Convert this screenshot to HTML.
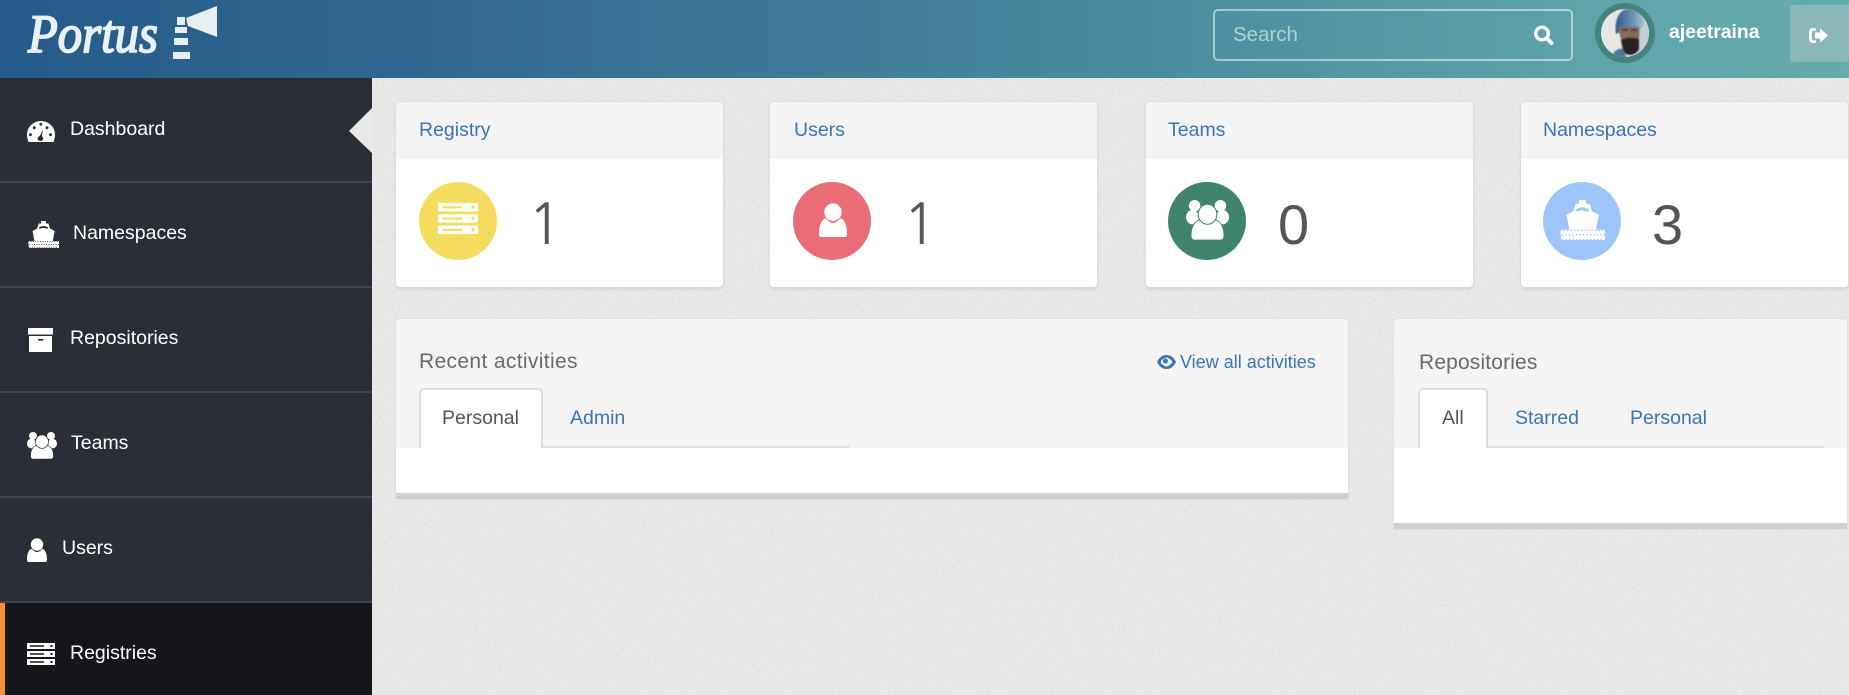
<!DOCTYPE html>
<html lang="en"><head><meta charset="utf-8"><title>Portus</title>
<style>
html,body{margin:0;padding:0;width:1849px;height:695px;overflow:hidden;background:#e9e9e9;font-family:"Liberation Sans",Arial,sans-serif}
.a{position:absolute}
.t{position:absolute;white-space:nowrap;line-height:1;font-size:19.5px}
.w{color:#fff}.b{color:#3a75b5}
.hd{left:0;top:0;width:1849px;height:78px;background:linear-gradient(90deg,#265b8a 0,#2f668f 22%,#4b8e9e 64%,#5ea4a9 86%,#67abab 100%)}
.side{left:0;top:78px;width:372px;height:617px;background:#2b2e37}
.dv{left:0;width:372px;height:2px;background:#40434e}
.card{width:327px;height:185px;top:102px;background:#fff;border-radius:4px;box-shadow:0 0 0 1px #dcdcdc,0 2px 3px rgba(0,0,0,.1);overflow:hidden}
.card i{display:block;height:57px;background:#f4f4f4}
.circ{width:78px;height:78px;border-radius:50%;top:182px}
.num{font-size:56px;color:#555;top:197px}
.one{font-family:"NanumGothic","Liberation Sans",sans-serif}
.panel{background:#fff;border-radius:4px 4px 0 0;box-shadow:0 0 0 1px #e0e0e0;border-bottom:6px solid #cfcfcf;box-sizing:border-box}
.ph{left:0;top:0;right:0;height:129px;background:#f4f4f4;border-radius:4px 4px 0 0}
.tab{top:388px;height:60px;background:#fff;border:2px solid #dcdcdc;border-bottom:0;border-radius:5px 5px 0 0;box-sizing:border-box}
.ln{height:2px;top:446px;background:#dcdcdc}
.tt{font-size:21px;color:#6a6a6a;letter-spacing:.35px;top:351px}
svg{position:absolute;overflow:visible}
</style></head><body>
<svg width="0" height="0" style="left:0;top:0">
<defs>
<filter id="nz" x="0" y="0" width="100%" height="100%"><feTurbulence type="fractalNoise" baseFrequency=".55" numOctaves="3" seed="4"/><feColorMatrix values="0 0 0 0 .55  0 0 0 0 .55  0 0 0 0 .55  .5 .5 0 0 -.45"/></filter>
<filter id="bl"><feGaussianBlur stdDeviation=".9"/></filter>
<symbol id="server" viewBox="0 0 28 22" preserveAspectRatio="none">
<path fill="#fff" d="M0 0h28v6H0zM0 8h28v6H0zM0 16h28v6H0z"/>
<path fill="var(--c)" d="M3 2.3h14v1.5H3zM3 10.3h14v1.5H3zM3 18.3h14v1.5H3zM23.5 2h2v2h-2zM23.5 10h2v2h-2zM23.5 18h2v2h-2z"/>
</symbol>
<symbol id="user" viewBox="0 0 20 24" preserveAspectRatio="none">
<path fill="#fff" d="M1.5 24C.5 24 0 23 0 21.5 0 15 2 11.500 5 10.500c1.500 2.500 3 3.500 5 3.500s3.500-1 5-3.500c3 1 5 4.500 5 11 0 1.500-.5 2.500-1.500 2.500z"/>
<circle cx="10" cy="6.500" r="6.500" fill="#fff" stroke="var(--c)" stroke-width=".6"/>
</symbol>
<symbol id="team" viewBox="0 0 30 28" preserveAspectRatio="none">
<g fill="#fff">
<circle cx="6" cy="4" r="4"/><circle cx="24" cy="4" r="4"/>
<ellipse cx="4.500" cy="12" rx="4.500" ry="5"/><ellipse cx="25.500" cy="12" rx="4.500" ry="5"/>
<path d="M6 28c-1.500 0-2.500-1-2.500-3 0-6 2.500-10.500 6-11 2 2.500 9 2.500 11 0 3.500.5 6 5 6 11 0 2-1 3-2.500 3z" stroke="var(--c)" stroke-width=".6"/>
<ellipse cx="15" cy="10" rx="6.500" ry="7" stroke="var(--c)" stroke-width=".7"/>
</g>
</symbol>
<symbol id="ship" viewBox="0 0 31 27" preserveAspectRatio="none">
<path fill="#fff" d="M13 0h5v2.500h2.500l1.500 5 4.700 2.500-2 10.500H6.500l-2-10.500L9.200 7.500l1.500-5H13z"/>
<path fill="var(--c)" d="M11 6.500c2.800-2 6.200-2 9 0l-.5 1.500c-2.500-1.300-5.500-1.300-8 0z"/>
<path fill="#fff" d="M0 20h31v7H1z"/>
<path stroke="var(--c)" stroke-width="1.100" stroke-linecap="round" stroke-dasharray="0 2.400" d="M.5 20.500h30M1.700 23.500h29"/>
<path stroke="var(--c)" stroke-width="1.100" stroke-linecap="round" stroke-dasharray="0 2.400" d="M2 26.800h28"/>
</symbol>
</defs>
</svg>
<svg style="left:372px;top:78px" width="1477" height="617"><rect width="1477" height="617" filter="url(#nz)"/></svg>

<div class="a hd"></div>
<!-- logo -->
<svg style="left:0;top:0" width="240" height="78">
<text x="28" y="52" font-family="'Liberation Serif',serif" font-style="italic" font-size="54" fill="#e9f1f5" stroke="#e9f1f5" stroke-width="1.800" stroke-linejoin="round" textLength="130" lengthAdjust="spacingAndGlyphs">Portus</text>
<path fill="#e6eef2" d="M177 17h8v8h-8zM175 27h12v6h-12zM174 38h14v7h-14zM173 52h17v7h-17z"/>
<path fill="#e6eef2" d="M186 18 217 6v31l-29-11z"/>
</svg>
<!-- search -->
<div class="a" style="left:1213px;top:9px;width:360px;height:52px;box-sizing:border-box;border:2px solid rgba(255,255,255,.5);border-radius:5px"></div>
<div class="t" style="left:1233px;top:25px;font-size:20.500px;color:#a9d3d5">Search</div>
<svg style="left:1533px;top:25px" width="21" height="20" viewBox="0 0 21 20"><circle cx="9" cy="8.500" r="6.300" fill="none" stroke="#fff" stroke-width="3.400"/><path d="M14 13.500l4.500 4.500" stroke="#fff" stroke-width="4" stroke-linecap="round"/></svg>
<!-- avatar -->
<svg style="left:1595px;top:3px" width="60" height="60" viewBox="0 0 60 60">
<defs><clipPath id="av"><circle cx="30" cy="30" r="24"/></clipPath>
<linearGradient id="tb" x1="0" x2="1"><stop offset="0" stop-color="#2f5d8c"/><stop offset=".6" stop-color="#6f95b5"/><stop offset="1" stop-color="#bccbd6"/></linearGradient></defs>
<circle cx="30" cy="30" r="30" fill="#43847f"/>
<g clip-path="url(#av)">
<rect width="60" height="60" fill="#e8e7e3"/>
<rect x="42" y="20" width="14" height="36" fill="#c5cfd6"/>
<g filter="url(#bl)">
<path d="M21 31C19 16 25 5 36 5c9 0 14 6 15 15l-8 8-16 0z" fill="url(#tb)"/>
<path d="M24 24h20c1 7 0 16-3 20-4 3-10 3-12 0-3-5-5-14-5-20z" fill="#86695a"/>
<path d="M26 37c4-3 13-3 18-1v10c-3 7-13 8-16 2z" fill="#2a2320"/>
<path d="M20 48c3-2 5-3 8-2l5 12H14z" fill="#4e7a98"/>
<path d="M27 27h6M36 27h6" stroke="#3f352e" stroke-width="1.800"/>
</g>
</g></svg>
<div class="t w" style="left:1669px;top:23px;font-weight:700;font-size:19.4px">ajeetraina</div>
<div class="a" style="left:1790px;top:5px;width:59px;height:57px;background:#8ab8b9;border-radius:3px 0 0 3px"></div>
<svg style="left:1809px;top:28px" width="19" height="15" viewBox="0 0 19 15"><path fill="none" stroke="#fff" stroke-width="2.800" d="M7 1.400H4C2.500 1.400 1.400 2.500 1.400 4v7c0 1.500 1.100 2.600 2.600 2.600h3"/><path fill="#fff" d="M6 4.500h5V.5L19 7.500l-8 7v-4H6z"/></svg>

<!-- sidebar -->
<div class="a side"></div>
<div class="a dv" style="top:181px"></div><div class="a dv" style="top:286px"></div><div class="a dv" style="top:391px"></div><div class="a dv" style="top:496px"></div><div class="a dv" style="top:601px"></div>
<div class="a" style="left:0;top:603px;width:372px;height:92px;background:#151619"></div>
<div class="a" style="left:0;top:603px;width:5px;height:92px;background:#f68f33"></div>
<svg style="left:349px;top:108px" width="23" height="45"><path fill="#e9e9e9" d="M23 0v45L0 23z"/></svg>

<svg style="left:27px;top:121px" width="28" height="21" viewBox="0 0 27 21" preserveAspectRatio="none">
<path fill="#fff" d="M13.500 0A13.500 13.500 0 0 0 0 13.500c0 2.700.6 5.300 1.500 7.500h24c.9-2.200 1.500-4.800 1.500-7.500A13.500 13.500 0 0 0 13.500 0z"/>
<g fill="#2b2e37"><circle cx="13.300" cy="3.300" r="1.400"/><circle cx="7" cy="6.700" r="1.400"/><circle cx="19.300" cy="6.700" r="1.400"/><circle cx="3.300" cy="13.700" r="1.400"/><circle cx="22.700" cy="13.700" r="1.400"/>
<path d="M15.300 8.500l-.9 6.800c.9.7 1.200 1.500 1.200 2.400 0 1.300-1 2.300-2.600 2.300s-2.800-1-2.800-2.300c0-1.300.9-2.300 2.200-2.700z"/></g></svg>
<div class="t w" style="left:70px;top:120px">Dashboard</div>

<svg style="left:28px;top:221px;--c:#2b2e37" width="31" height="27"><use href="#ship"/></svg>
<div class="t w" style="left:73px;top:224px">Namespaces</div>

<svg style="left:28px;top:328px" width="25" height="24" viewBox="0 0 25 24"><path fill="#fff" d="M0 0h25v6.500H0zM1 8h23v16H1z"/><path fill="#2b2e37" d="M10 11h5.500v1.600H10z"/></svg>
<div class="t w" style="left:70px;top:329px">Repositories</div>

<svg style="left:27px;top:432px;--c:#2b2e37" width="30" height="27"><use href="#team"/></svg>
<div class="t w" style="left:71px;top:434px">Teams</div>

<svg style="left:27px;top:538px;--c:#2b2e37" width="20" height="24"><use href="#user"/></svg>
<div class="t w" style="left:62px;top:539px">Users</div>

<svg style="left:27px;top:643px;--c:#151619" width="28" height="22"><use href="#server"/></svg>
<div class="t w" style="left:70px;top:644px">Registries</div>

<!-- cards -->
<div class="a card" style="left:396px"><i></i></div>
<div class="a card" style="left:770px"><i></i></div>
<div class="a card" style="left:1146px"><i></i></div>
<div class="a card" style="left:1521px"><i></i></div>
<div class="t b" style="left:419px;top:121px">Registry</div>
<div class="t b" style="left:794px;top:121px">Users</div>
<div class="t b" style="left:1168px;top:121px">Teams</div>
<div class="t b" style="left:1543px;top:121px">Namespaces</div>

<div class="a circ" style="left:419px;background:#f4dc5e"></div>
<div class="a circ" style="left:793px;background:#ea6c77"></div>
<div class="a circ" style="left:1168px;background:#40846c"></div>
<div class="a circ" style="left:1543px;background:#9dc5f9"></div>
<svg style="left:438px;top:203px;--c:#f4dc5e" width="40" height="31"><use href="#server"/></svg>
<svg style="left:819px;top:203px;--c:#ea6c77" width="28" height="34"><use href="#user"/></svg>
<svg style="left:1186px;top:200px;--c:#40846c" width="43" height="40"><use href="#team"/></svg>
<svg style="left:1560px;top:200px;--c:#9dc5f9" width="45" height="40"><use href="#ship"/></svg>
<div class="t num one" style="left:528px">1</div>
<div class="t num one" style="left:903px">1</div>
<div class="t num" style="left:1278px">0</div>
<div class="t num" style="left:1652px">3</div>

<!-- panels -->
<div class="a panel" style="left:396px;top:319px;width:952px;height:180px"><div class="a ph"></div></div>
<div class="a panel" style="left:1394px;top:319px;width:453px;height:210px"><div class="a ph"></div></div>
<div class="t tt" style="left:419px">Recent activities</div>
<div class="t tt" style="left:1419px;letter-spacing:.15px;top:352px">Repositories</div>
<svg style="left:1157px;top:355px" width="19" height="14" viewBox="0 0 19 14"><path fill="#3a75b5" fill-rule="evenodd" d="M9.500 0C5 0 2 3 0 7c2 4 5 7 9.500 7s7.500-3 9.500-7c-2-4-5-7-9.500-7zm0 2.500a4.500 4.500 0 1 1 0 9 4.500 4.500 0 0 1 0-9zm-6 4.500c.7-1.300 1.500-2.300 2.500-3a5.500 5.500 0 0 0 0 6c-1-.7-1.800-1.700-2.500-3zm12 0c-.7 1.300-1.500 2.300-2.500 3a5.500 5.500 0 0 0 0-6c1 .7 1.800 1.700 2.500 3z"/><circle cx="8.500" cy="6" r="2.500" fill="#3a75b5"/></svg>
<div class="t b" style="left:1180px;top:353px;font-size:18px">View all activities</div>

<div class="a ln" style="left:543px;width:306px"></div>
<div class="a tab" style="left:419px;width:124px"></div>
<div class="t" style="left:442px;top:409px;color:#555">Personal</div>
<div class="t b" style="left:570px;top:409px">Admin</div>

<div class="a ln" style="left:1487px;width:337px"></div>
<div class="a tab" style="left:1418px;width:70px"></div>
<div class="t" style="left:1442px;top:409px;color:#555">All</div>
<div class="t b" style="left:1515px;top:409px">Starred</div>
<div class="t b" style="left:1630px;top:409px">Personal</div>
</body></html>
